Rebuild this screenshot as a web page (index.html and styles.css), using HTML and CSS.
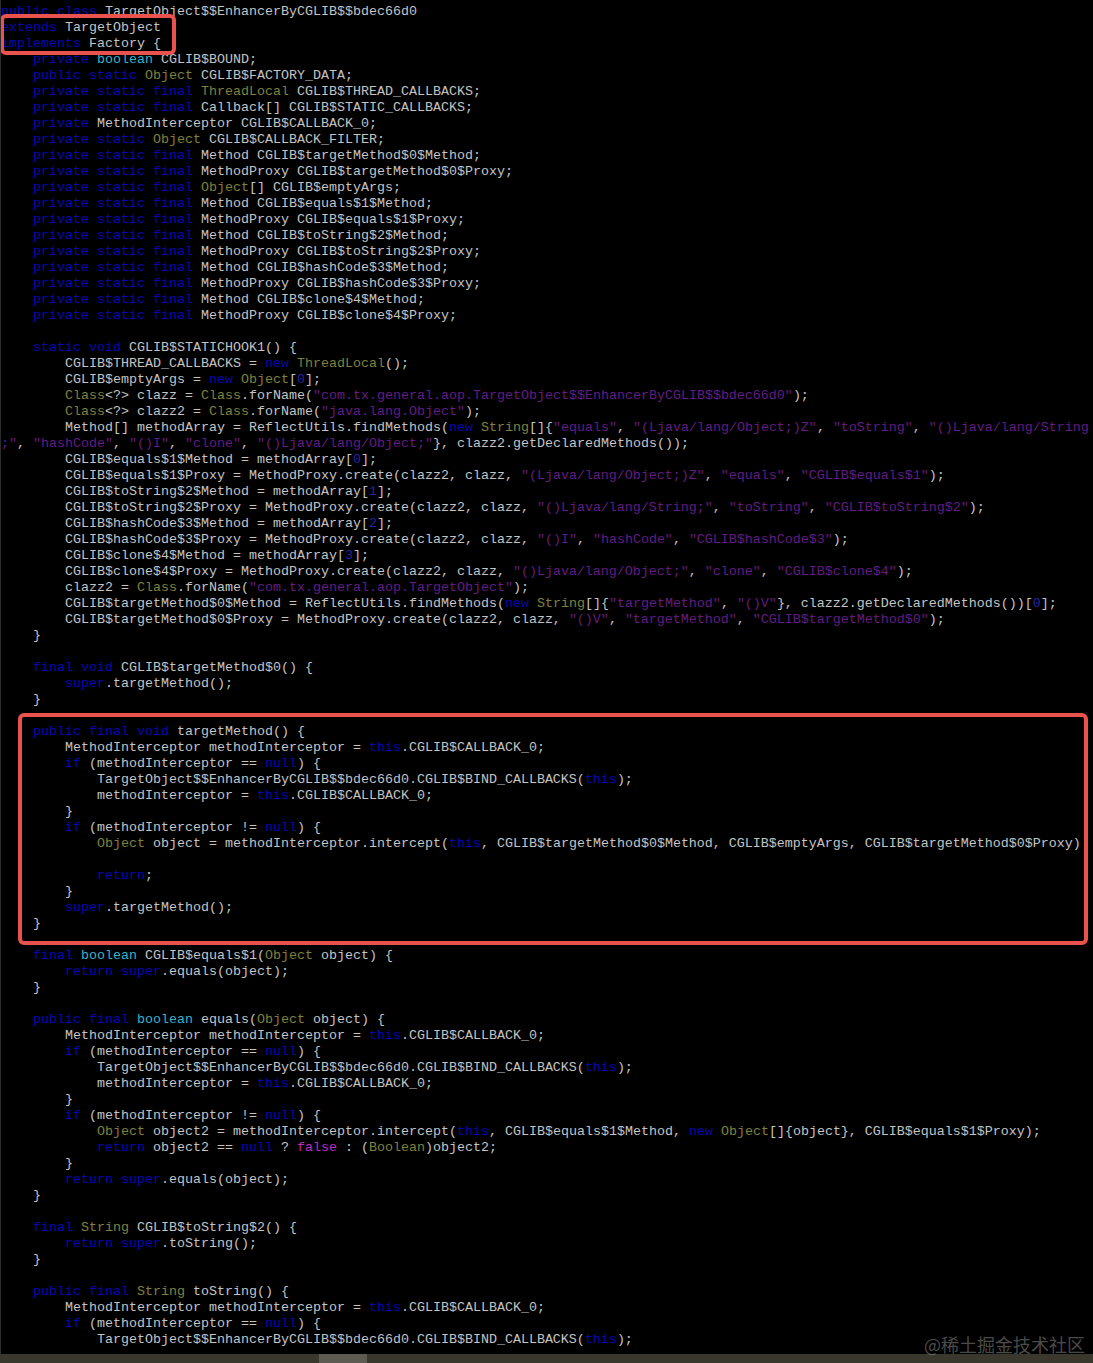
FILE: index.html
```html
<!DOCTYPE html>
<html lang="en">
<head>
<meta charset="utf-8">
<title>Decompiled CGLIB proxy</title>
<link rel="stylesheet" href="styles.css">
</head>
<body>
<main class="window">
<div class="console">
<pre class="code"><span class="k">public class</span> TargetObject$$EnhancerByCGLIB$$bdec66d0
<span class="k">extends</span> TargetObject
<span class="k">implements</span> Factory {
    <span class="k">private</span> <span class="b">boolean</span> CGLIB$BOUND;
    <span class="k">public static</span> <span class="t">Object</span> CGLIB$FACTORY_DATA;
    <span class="k">private static final</span> <span class="t">ThreadLocal</span> CGLIB$THREAD_CALLBACKS;
    <span class="k">private static final</span> Callback[] CGLIB$STATIC_CALLBACKS;
    <span class="k">private</span> MethodInterceptor CGLIB$CALLBACK_0;
    <span class="k">private static</span> <span class="t">Object</span> CGLIB$CALLBACK_FILTER;
    <span class="k">private static final</span> Method CGLIB$targetMethod$0$Method;
    <span class="k">private static final</span> MethodProxy CGLIB$targetMethod$0$Proxy;
    <span class="k">private static final</span> <span class="t">Object</span>[] CGLIB$emptyArgs;
    <span class="k">private static final</span> Method CGLIB$equals$1$Method;
    <span class="k">private static final</span> MethodProxy CGLIB$equals$1$Proxy;
    <span class="k">private static final</span> Method CGLIB$toString$2$Method;
    <span class="k">private static final</span> MethodProxy CGLIB$toString$2$Proxy;
    <span class="k">private static final</span> Method CGLIB$hashCode$3$Method;
    <span class="k">private static final</span> MethodProxy CGLIB$hashCode$3$Proxy;
    <span class="k">private static final</span> Method CGLIB$clone$4$Method;
    <span class="k">private static final</span> MethodProxy CGLIB$clone$4$Proxy;

    <span class="k">static void</span> CGLIB$STATICHOOK1() {
        CGLIB$THREAD_CALLBACKS = <span class="k">new</span> <span class="t">ThreadLocal</span>();
        CGLIB$emptyArgs = <span class="k">new</span> <span class="t">Object</span>[<span class="n">0</span>];
        <span class="t">Class</span>&lt;?&gt; clazz = <span class="t">Class</span>.forName(<span class="s">"com.tx.general.aop.TargetObject$$EnhancerByCGLIB$$bdec66d0"</span>);
        <span class="t">Class</span>&lt;?&gt; clazz2 = <span class="t">Class</span>.forName(<span class="s">"java.lang.Object"</span>);
        Method[] methodArray = ReflectUtils.findMethods(<span class="k">new</span> <span class="t">String</span>[]{<span class="s">"equals"</span>, <span class="s">"(Ljava/lang/Object;)Z"</span>, <span class="s">"toString"</span>, <span class="s">"()Ljava/lang/String</span>
<span class="s">;"</span>, <span class="s">"hashCode"</span>, <span class="s">"()I"</span>, <span class="s">"clone"</span>, <span class="s">"()Ljava/lang/Object;"</span>}, clazz2.getDeclaredMethods());
        CGLIB$equals$1$Method = methodArray[<span class="n">0</span>];
        CGLIB$equals$1$Proxy = MethodProxy.create(clazz2, clazz, <span class="s">"(Ljava/lang/Object;)Z"</span>, <span class="s">"equals"</span>, <span class="s">"CGLIB$equals$1"</span>);
        CGLIB$toString$2$Method = methodArray[<span class="n">1</span>];
        CGLIB$toString$2$Proxy = MethodProxy.create(clazz2, clazz, <span class="s">"()Ljava/lang/String;"</span>, <span class="s">"toString"</span>, <span class="s">"CGLIB$toString$2"</span>);
        CGLIB$hashCode$3$Method = methodArray[<span class="n">2</span>];
        CGLIB$hashCode$3$Proxy = MethodProxy.create(clazz2, clazz, <span class="s">"()I"</span>, <span class="s">"hashCode"</span>, <span class="s">"CGLIB$hashCode$3"</span>);
        CGLIB$clone$4$Method = methodArray[<span class="n">3</span>];
        CGLIB$clone$4$Proxy = MethodProxy.create(clazz2, clazz, <span class="s">"()Ljava/lang/Object;"</span>, <span class="s">"clone"</span>, <span class="s">"CGLIB$clone$4"</span>);
        clazz2 = <span class="t">Class</span>.forName(<span class="s">"com.tx.general.aop.TargetObject"</span>);
        CGLIB$targetMethod$0$Method = ReflectUtils.findMethods(<span class="k">new</span> <span class="t">String</span>[]{<span class="s">"targetMethod"</span>, <span class="s">"()V"</span>}, clazz2.getDeclaredMethods())[<span class="n">0</span>];
        CGLIB$targetMethod$0$Proxy = MethodProxy.create(clazz2, clazz, <span class="s">"()V"</span>, <span class="s">"targetMethod"</span>, <span class="s">"CGLIB$targetMethod$0"</span>);
    }

    <span class="k">final void</span> CGLIB$targetMethod$0() {
        <span class="k">super</span>.targetMethod();
    }

    <span class="k">public final void</span> targetMethod() {
        MethodInterceptor methodInterceptor = <span class="k">this</span>.CGLIB$CALLBACK_0;
        <span class="k">if</span> (methodInterceptor == <span class="k">null</span>) {
            TargetObject$$EnhancerByCGLIB$$bdec66d0.CGLIB$BIND_CALLBACKS(<span class="k">this</span>);
            methodInterceptor = <span class="k">this</span>.CGLIB$CALLBACK_0;
        }
        <span class="k">if</span> (methodInterceptor != <span class="k">null</span>) {
            <span class="t">Object</span> object = methodInterceptor.intercept(<span class="k">this</span>, CGLIB$targetMethod$0$Method, CGLIB$emptyArgs, CGLIB$targetMethod$0$Proxy)

            <span class="k">return</span>;
        }
        <span class="k">super</span>.targetMethod();
    }

    <span class="k">final</span> <span class="b">boolean</span> CGLIB$equals$1(<span class="t">Object</span> object) {
        <span class="k">return super</span>.equals(object);
    }

    <span class="k">public final</span> <span class="b">boolean</span> equals(<span class="t">Object</span> object) {
        MethodInterceptor methodInterceptor = <span class="k">this</span>.CGLIB$CALLBACK_0;
        <span class="k">if</span> (methodInterceptor == <span class="k">null</span>) {
            TargetObject$$EnhancerByCGLIB$$bdec66d0.CGLIB$BIND_CALLBACKS(<span class="k">this</span>);
            methodInterceptor = <span class="k">this</span>.CGLIB$CALLBACK_0;
        }
        <span class="k">if</span> (methodInterceptor != <span class="k">null</span>) {
            <span class="t">Object</span> object2 = methodInterceptor.intercept(<span class="k">this</span>, CGLIB$equals$1$Method, <span class="k">new</span> <span class="t">Object</span>[]{object}, CGLIB$equals$1$Proxy);
            <span class="k">return</span> object2 == <span class="k">null</span> ? <span class="m">false</span> : (<span class="t">Boolean</span>)object2;
        }
        <span class="k">return super</span>.equals(object);
    }

    <span class="k">final</span> <span class="t">String</span> CGLIB$toString$2() {
        <span class="k">return super</span>.toString();
    }

    <span class="k">public final</span> <span class="t">String</span> toString() {
        MethodInterceptor methodInterceptor = <span class="k">this</span>.CGLIB$CALLBACK_0;
        <span class="k">if</span> (methodInterceptor == <span class="k">null</span>) {
            TargetObject$$EnhancerByCGLIB$$bdec66d0.CGLIB$BIND_CALLBACKS(<span class="k">this</span>);</pre>
<div class="mark mark-header"></div>
<div class="mark mark-method"></div>
</div>
<div class="scrollbar"><div class="thumb"></div></div>
<div class="watermark">@稀土掘金技术社区</div>
</main>
</body>
</html>
```
FILE: styles.css
```css
html, body {
  margin: 0;
  height: 100%;
  background: #000;
}

.window {
  position: relative;
  display: flex;
  flex-direction: column;
  height: 100vh;
  overflow: hidden;
}

.console {
  position: relative;
  flex: 1;
  min-height: 0;
  overflow: hidden;
  background: #000;
  border-left: 1px solid #2c2c2c;
}

.code {
  margin: 0;
  padding: 4px 0 0 0;
  font-family: "Liberation Mono", monospace;
  font-size: 13.33px;
  line-height: 16px;
  color: #c4c4c4;
  white-space: pre;
}

.k { color: #0808b0; }
.b { color: #38b4c8; }
.t { color: #80803c; }
.s { color: #641c80; }
.n { color: #2424a0; }
.m { color: #c028c0; }

.mark {
  position: absolute;
  box-sizing: border-box;
  border: 4px solid #e9524d;
}

.mark-header {
  left: -1px;
  top: 14px;
  width: 176px;
  height: 41px;
  border-radius: 6px;
}

.mark-method {
  left: 17px;
  top: 713px;
  width: 1070px;
  height: 232px;
  border-radius: 6px;
}

.scrollbar {
  flex: 0 0 9px;
  background: #3a382c;
  display: flex;
  padding-left: 319px;
}

.thumb {
  width: 48px;
  background: #5e5c52;
}

.watermark {
  position: absolute;
  right: 8px;
  bottom: 9px;
  font-family: "Noto Sans CJK SC", sans-serif;
  font-size: 18px;
  line-height: 20px;
  color: rgba(170, 170, 170, 0.45);
}
```
